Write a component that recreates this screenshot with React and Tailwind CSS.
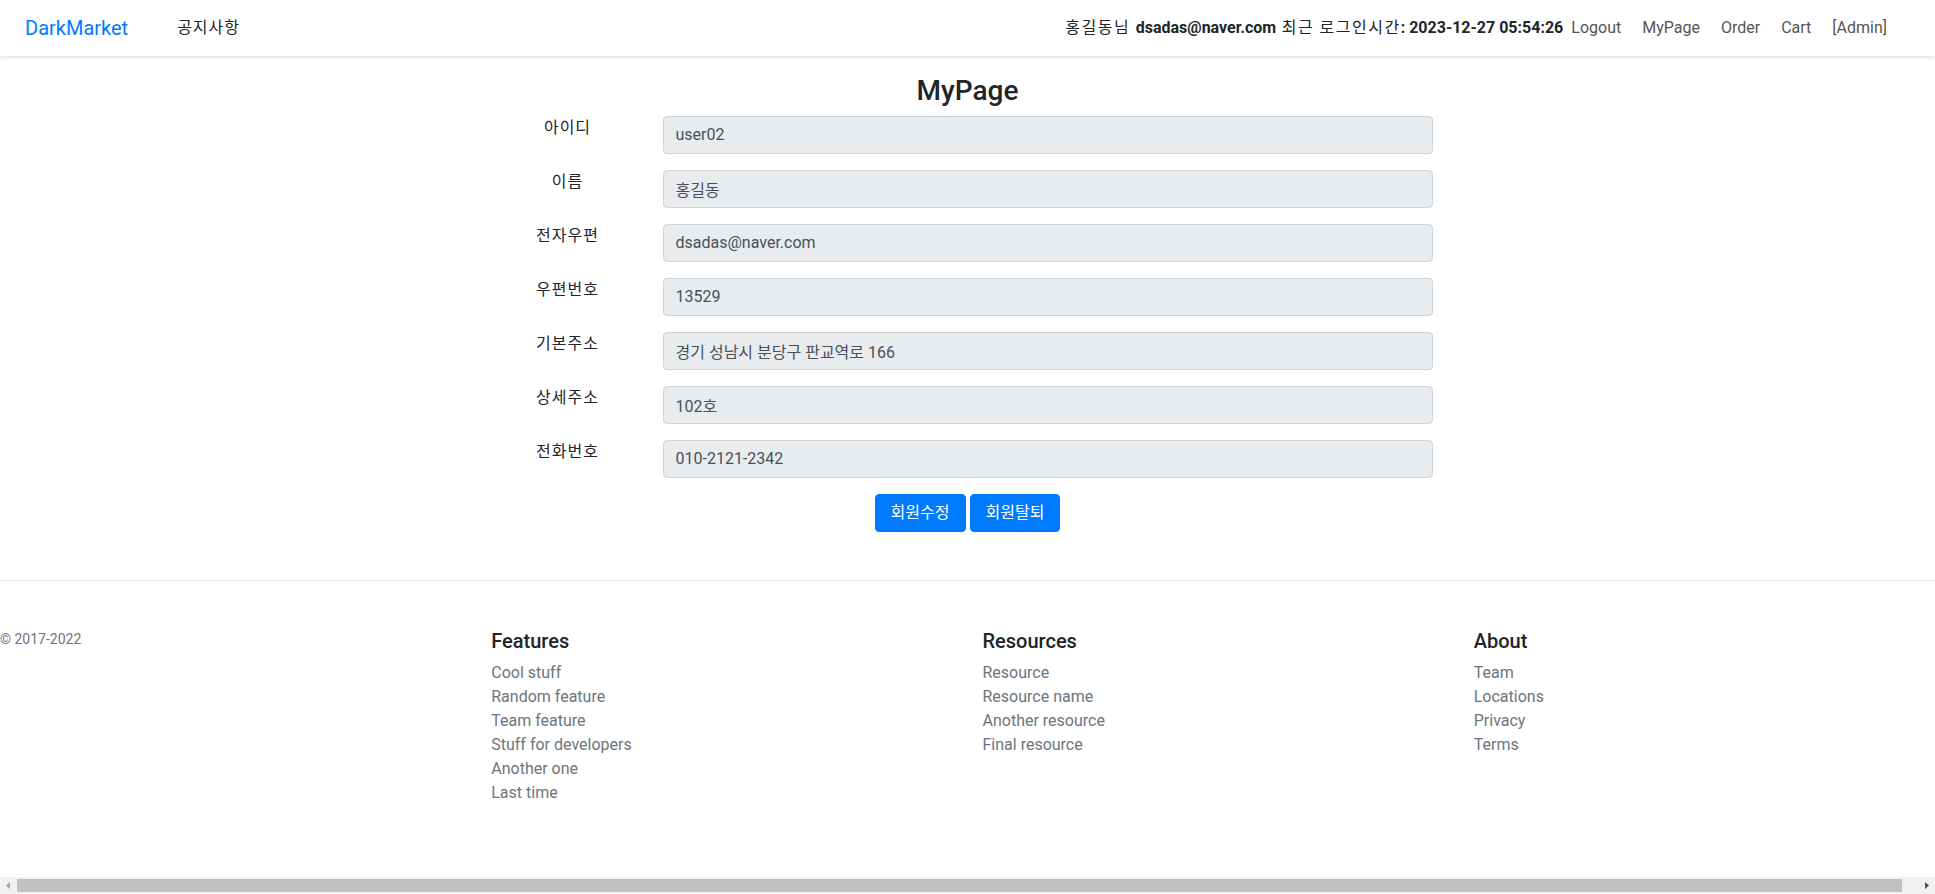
import React from 'react';

const fields = [
  { label: '아이디', value: 'user02' },
  { label: '이름', value: '홍길동' },
  { label: '전자우편', value: 'dsadas@naver.com' },
  { label: '우편번호', value: '13529' },
  { label: '기본주소', value: '경기 성남시 분당구 판교역로 166' },
  { label: '상세주소', value: '102호' },
  { label: '전화번호', value: '010-2121-2342' },
];

const footerCols = [
  { title: 'Features', links: ['Cool stuff', 'Random feature', 'Team feature', 'Stuff for developers', 'Another one', 'Last time'] },
  { title: 'Resources', links: ['Resource', 'Resource name', 'Another resource', 'Final resource'] },
  { title: 'About', links: ['Team', 'Locations', 'Privacy', 'Terms'] },
];

const navLinks = ['Logout', 'MyPage', 'Order', 'Cart', '[Admin]'];

// window scrollbar as it shows in the screenshot (row overflows by 15px)
const ScrollBar = () => (
  <div className="fixed bottom-0 left-0 right-0 h-[17px] bg-[#f1f1f1] flex items-center">
    <svg width="17" height="17" viewBox="0 0 17 17" className="shrink-0">
      <path d="M10 5 L6 8.5 L10 12 Z" fill="#a3a3a3" />
    </svg>
    <div className="flex-1 h-[13px] bg-[#c1c1c1]" />
    <svg width="17" height="17" viewBox="0 0 17 17" className="shrink-0 ml-[16px]">
      <path d="M7 5 L11 8.5 L7 12 Z" fill="#505050" />
    </svg>
  </div>
);

const App = () => {
  return (
    <div className="min-h-screen bg-white text-[#212529] text-[16px] leading-6 font-['Roboto','Noto_Sans_CJK_KR',sans-serif]">
      {/* navbar */}
      <nav className="h-[56px] flex items-center pl-[25px] pr-[48px] shadow-[0_1px_4px_rgba(0,0,0,0.15)]">
        <a href="#" className="text-[20px] text-[#007bff] mr-[49px]">DarkMarket</a>
        <a href="#" className="text-[#212529] tracking-[1px]">공지사항</a>
        <div className="ml-auto flex items-center">
          <span className="mr-[8px]">
            <span className="tracking-[1.5px]">홍길동님 </span>
            <b>dsadas@naver.com</b>
            <span className="tracking-[1.5px]"> 최근 로그인시간</span>
            <b>: 2023-12-27 05:54:26</b>
          </span>
          <ul className="flex gap-[21px]">
            {navLinks.map((link) => (
              <li key={link}>
                <a href="#" className="text-[#555]">{link}</a>
              </li>
            ))}
          </ul>
        </div>
      </nav>

      {/* mypage form */}
      <main className="w-[960px] mx-auto">
        <h3 className="text-center text-[28px] leading-[1.2] font-medium mt-[18px] mb-2">MyPage</h3>
        <form>
          {fields.map((field) => (
            <div key={field.label} className="flex mb-4">
              <label className="w-[160px] px-[15px] text-center tracking-[1px]">{field.label}</label>
              <div className="flex-1 px-[15px]">
                <input
                  type="text"
                  readOnly
                  value={field.value}
                  className="block w-full h-[38px] px-3 py-[6px] bg-[#e9ecef] border border-[#ced4da] rounded text-[#495057] outline-none"
                />
              </div>
            </div>
          ))}
          <div className="flex justify-center gap-1">
            <button type="button" className="h-[38px] px-[15px] bg-[#007bff] border border-[#007bff] text-white rounded">
              회원수정
            </button>
            <button type="button" className="h-[38px] px-[15px] bg-[#007bff] border border-[#007bff] text-white rounded">
              회원탈퇴
            </button>
          </div>
        </form>
      </main>

      {/* footer */}
      <footer className="mt-12 pt-12 mb-12 border-t border-[#dee2e6]">
        <div className="grid grid-cols-4 -mx-[15px]">
          <div className="px-[15px]">
            <small className="block text-[14px] leading-[21px] text-[#6c757d]">© 2017-2022</small>
          </div>
          {footerCols.map((col) => (
            <div key={col.title} className="px-[15px]">
              <h5 className="text-[20px] leading-[1.2] font-medium mb-2">{col.title}</h5>
              <ul>
                {col.links.map((link) => (
                  <li key={link}>
                    <a href="#" className="text-[#6c757d]">{link}</a>
                  </li>
                ))}
              </ul>
            </div>
          ))}
        </div>
      </footer>

      <ScrollBar />
    </div>
  );
};

export default App;
